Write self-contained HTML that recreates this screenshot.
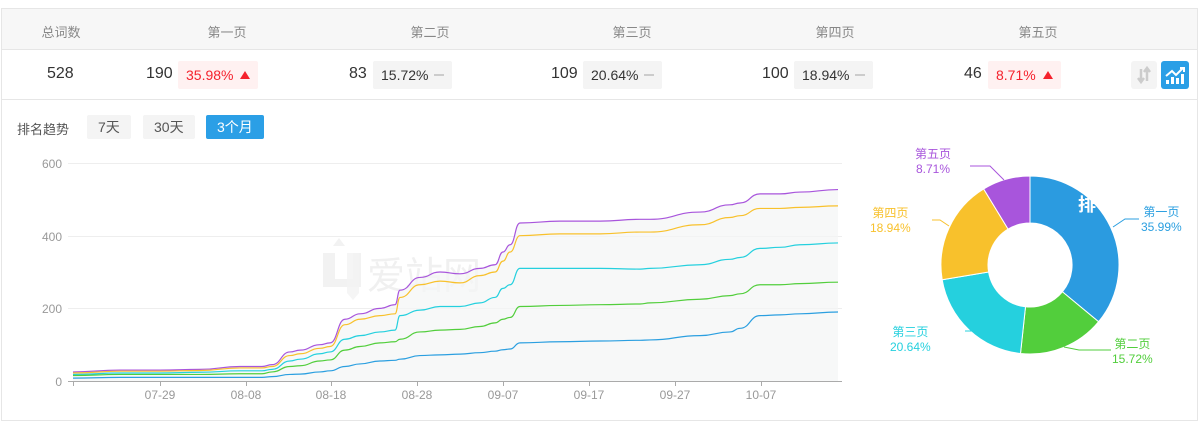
<!DOCTYPE html>
<html><head><meta charset="utf-8">
<style>
*{margin:0;padding:0;box-sizing:border-box}
body{width:1199px;height:424px;background:#fff;font-family:"Liberation Sans","Noto Sans CJK SC",sans-serif;position:relative;overflow:hidden}
.box{position:absolute;left:1px;top:8px;width:1197px;height:413px;border:1px solid #e6e6e6}
.hdr{position:absolute;left:2px;top:9px;width:1195px;height:41px;background:#f7f7f7;border-bottom:1px solid #e6e6e6}
.row{position:absolute;left:2px;top:99px;width:1195px;height:1px;background:#e6e6e6}
.t{position:absolute;font-size:13px;color:#888;transform:translateX(-50%);top:22px}
.n{position:absolute;font-size:16px;color:#333;top:65px}
.b{position:absolute;top:61px;height:28px;line-height:28px;font-size:14px;padding:0 8px;border-radius:2px;background:#f4f4f4;color:#333}
.b.r{background:#fff1f1;color:#f5222d}
.up{display:inline-block;width:0;height:0;border-left:5px solid transparent;border-right:5px solid transparent;border-bottom:8px solid #f5222d;margin-left:7px;vertical-align:1px}
.dash{display:inline-block;width:10px;height:2px;background:#ccc;margin-left:6px;vertical-align:4px}
.btn{position:absolute;top:115px;height:24px;line-height:24px;font-size:14px;padding:0 11px;background:#f4f4f4;color:#555;border-radius:2px}
.lab{position:absolute;font-size:12px;line-height:15px;text-align:center}
</style></head><body>
<div class="box"></div>
<div class="hdr"></div>
<div class="row"></div>
<div class="t" style="left:61px">总词数</div>
<div class="t" style="left:227px">第一页</div>
<div class="t" style="left:430px">第二页</div>
<div class="t" style="left:632px">第三页</div>
<div class="t" style="left:835px">第四页</div>
<div class="t" style="left:1038px">第五页</div>
<div class="n" style="left:47px">528</div>
<div class="n" style="left:146px">190</div><div class="b r" style="left:178px">35.98%<span class="up"></span></div>
<div class="n" style="left:349px">83</div><div class="b" style="left:373px">15.72%<span class="dash"></span></div>
<div class="n" style="left:551px">109</div><div class="b" style="left:583px">20.64%<span class="dash"></span></div>
<div class="n" style="left:762px">100</div><div class="b" style="left:794px">18.94%<span class="dash"></span></div>
<div class="n" style="left:964px">46</div><div class="b r" style="left:988px">8.71%<span class="up"></span></div>
<div style="position:absolute;left:1131px;top:61px;width:26px;height:28px;background:#f4f4f4;border-radius:3px">
<svg width="26" height="28"><path d="M10 8v12M7 17l3 4 3-4" stroke="#ccc" stroke-width="2.5" fill="none"/><path d="M16 20V8M13 11l3-4 3 4" stroke="#ccc" stroke-width="2.5" fill="none"/></svg></div>
<div style="position:absolute;left:1161px;top:61px;width:28px;height:28px;background:#2b9fe6;border-radius:3px">
<svg width="28" height="28"><path d="M5 15l6-5 4 4 7-7" stroke="#fff" stroke-width="2" fill="none"/><path d="M19 7h4v4" stroke="#fff" stroke-width="2" fill="none"/><rect x="5" y="19" width="3" height="4" fill="#fff"/><rect x="10" y="16" width="3" height="7" fill="#fff"/><rect x="15" y="17" width="3" height="6" fill="#fff"/><rect x="20" y="13" width="3" height="10" fill="#fff"/></svg></div>
<div style="position:absolute;left:17px;top:119px;font-size:13px;color:#555">排名趋势</div>
<div class="btn" style="left:87px">7天</div>
<div class="btn" style="left:143px">30天</div>
<div class="btn" style="left:206px;background:#2b9fe6;color:#fff">3个月</div>
<svg id="c" width="1199" height="424" style="position:absolute;left:0;top:0">
<g stroke="#eee" stroke-width="1"><line x1="68" x2="842" y1="163.5" y2="163.5"/><line x1="68" x2="842" y1="236.5" y2="236.5"/><line x1="68" x2="842" y1="308.5" y2="308.5"/></g>
<line x1="68" x2="842" y1="381.5" y2="381.5" stroke="#aaa"/>
<g font-size="12" fill="#999" text-anchor="end"><text x="62" y="168">600</text><text x="62" y="241">400</text><text x="62" y="313">200</text><text x="62" y="386">0</text></g>
<g font-size="12" fill="#999" text-anchor="middle"><text x="160" y="399">07-29</text><text x="246" y="399">08-08</text><text x="331" y="399">08-18</text><text x="417" y="399">08-28</text><text x="503" y="399">09-07</text><text x="589" y="399">09-17</text><text x="675" y="399">09-27</text><text x="761" y="399">10-07</text></g>
<g stroke="#aaa"><line x1="73.5" x2="73.5" y1="381" y2="386"/><line x1="160.5" x2="160.5" y1="381" y2="386"/><line x1="246.5" x2="246.5" y1="381" y2="386"/><line x1="331.5" x2="331.5" y1="381" y2="386"/><line x1="417.5" x2="417.5" y1="381" y2="386"/><line x1="503.5" x2="503.5" y1="381" y2="386"/><line x1="589.5" x2="589.5" y1="381" y2="386"/><line x1="675.5" x2="675.5" y1="381" y2="386"/><line x1="761.5" x2="761.5" y1="381" y2="386"/></g>
<g fill="#f2f2f2"><path d="M333 246h12l-6-8zM323 253h12v26h18v-26h8v34h-38z"/><path d="M347 253h12v40l-6 7-6-7z" opacity=".8"/></g>
<text x="367" y="289" font-size="38" fill="#f0f0f0">爱站网</text>
<g id="lines"></g>
<g id="pie"></g>
</svg>
<div class="lab" style="left:915px;top:147px;color:#a855dc">第五页<br>8.71%</div>
<div class="lab" style="left:870px;top:206px;color:#f8c12c">第四页<br>18.94%</div>
<div class="lab" style="left:1141px;top:205px;color:#2b9fe0">第一页<br>35.99%</div>
<div class="lab" style="left:890px;top:325px;color:#25d0de">第三页<br>20.64%</div>
<div class="lab" style="left:1112px;top:337px;color:#52ce3c">第二页<br>15.72%</div>
<script>
var xs=[73,120,160,200,240,262,272,290,300,320,330,345,360,380,395,400,420,440,460,480,495,503,510,520,560,600,640,650,700,730,740,760,780,800,838];
var S={
"#a855dc":[25,30,30,32,40,40,45,80,85,100,105,170,185,200,210,250,285,300,295,310,320,355,375,435,440,440,445,445,465,485,490,515,515,520,527],
"#f8c12c":[22,27,27,29,36,36,40,70,75,90,95,155,170,180,185,230,265,275,270,290,300,330,355,400,405,405,410,410,430,450,455,475,475,478,482],
"#25d0de":[18,22,22,24,28,28,32,55,60,75,80,115,125,135,140,180,195,205,205,215,230,255,265,310,310,310,308,310,320,335,340,365,368,375,380],
"#52ce3c":[15,18,18,18,20,20,25,40,42,55,58,85,95,105,108,115,135,140,142,150,160,170,175,205,208,210,212,215,225,235,240,265,265,268,272],
"#2b9fe0":[8,10,10,10,10,10,12,18,19,25,28,40,47,55,57,60,70,72,74,78,82,86,88,105,108,110,112,113,125,135,145,180,182,185,190]};
function Y(v){return 381-v*0.3633}
var g=document.getElementById('lines'),h='',first=true;
for(var c in S){var d='M'+xs[0]+' '+Y(S[c][0]);for(var i=1;i<xs.length;i++){var mx=(xs[i-1]+xs[i])/2;d+=' C'+mx+' '+Y(S[c][i-1])+' '+mx+' '+Y(S[c][i])+' '+xs[i]+' '+Y(S[c][i]);}
if(first){h+='<path d="'+d+' L838 381 L73 381Z" fill="#f3f5f5" opacity="0.7"/>';first=false;}
h+='<path d="'+d+'" stroke="'+c+'" stroke-width="1.2" fill="none"/>';}
g.innerHTML=h;
var cx=1030,cy=265,R=89,r=42,a=0,p=document.getElementById('pie'),ph='';
var P=[[35.99,'#2b9be0'],[15.72,'#52ce3c'],[20.64,'#25d0de'],[18.94,'#f8c12c'],[8.71,'#a855dc']];
function pt(rad,ang){var t=ang*Math.PI/180;return (cx+rad*Math.sin(t)).toFixed(1)+' '+(cy-rad*Math.cos(t)).toFixed(1)}
P.forEach(function(s){var b=a+s[0]*3.6,l=(b-a)>180?1:0;
ph+='<path d="M'+pt(R,a)+' A'+R+' '+R+' 0 '+l+' 1 '+pt(R,b)+' L'+pt(r,b)+' A'+r+' '+r+' 0 '+l+' 0 '+pt(r,a)+'Z" fill="'+s[1]+'" stroke="#fff" stroke-width="1"/>';a=b;});
ph+='<g fill="none" stroke-width="1"><path d="M1113 227l12-8h14" stroke="#2b9fe0"/><path d="M1064 347l15 3h32" stroke="#52ce3c"/><path d="M989 320l-12 11h-12" stroke="#25d0de"/><path d="M949 226l-9-6h-8" stroke="#f8c12c"/><path d="M1004 180l-14-14h-20" stroke="#a855dc"/></g>';
ph+='<text x="1078" y="211" font-size="18" font-weight="bold" fill="#fff">排</text>';
p.innerHTML=ph;
</script>
</body></html>
